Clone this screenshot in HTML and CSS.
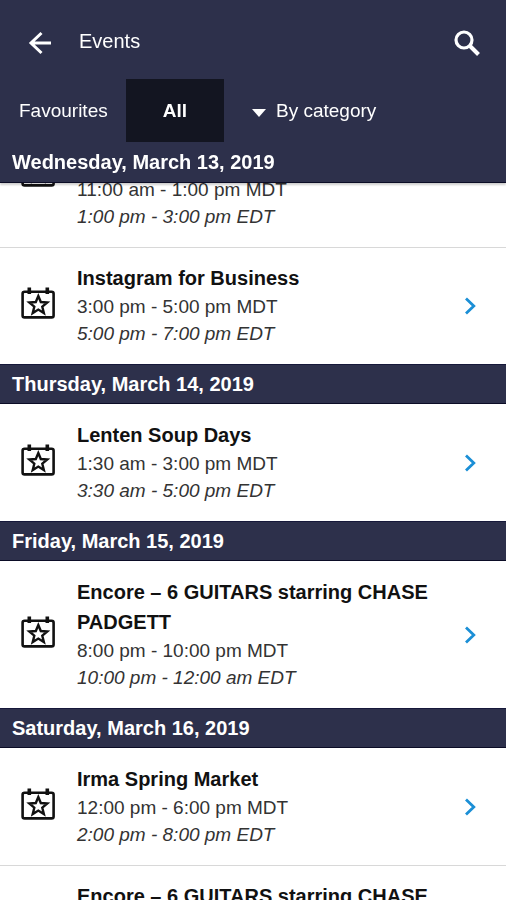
FILE: index.html
```html
<!DOCTYPE html>
<html lang="en">
<head>
<meta charset="utf-8">
<meta name="viewport" content="width=device-width, initial-scale=1">
<title>Events</title>
<link rel="stylesheet" href="styles.css">
</head>
<body>
<svg class="sprite" aria-hidden="true">
  <symbol id="calendar-star" viewBox="0 0 34 32">
    <rect x="1.6" y="4.8" width="31" height="25.6" rx="2" fill="none" stroke="#111" stroke-width="2.6"/>
    <path d="M8.3 0.5v6.5M26.3 0.5v6.5" stroke="#111" stroke-width="3.6"/>
    <path d="M17.3 9l2.5 6 6.5.5-5 4.2 1.6 6.4-5.6-3.5-5.6 3.5 1.6-6.4-5-4.2 6.5-.5z" fill="none" stroke="#111" stroke-width="2.4"/>
  </symbol>
  <symbol id="chevron" viewBox="0 0 12 18">
    <path d="M2 1.5l7.8 7.5L2 16.500" fill="none" stroke="#1b8fd6" stroke-width="2.8"/>
  </symbol>
</svg>

<header class="header">
  <div class="appbar">
    <button class="icon-button" type="button" aria-label="Back">
      <svg class="back-icon" viewBox="0 0 24 24"><path d="M23 12H3M13.500 2L3 12l10.500 10" fill="none" stroke="#fff" stroke-width="3"/></svg>
    </button>
    <h1 class="title">Events</h1>
    <button class="icon-button" type="button" aria-label="Search">
      <svg class="search-icon" viewBox="0 0 26 26"><circle cx="10" cy="10" r="8" fill="none" stroke="#fff" stroke-width="3.2"/><path d="M15.500 15.500l9 9" stroke="#fff" stroke-width="4"/></svg>
    </button>
  </div>
  <nav class="tabs">
    <button class="tab" type="button">Favourites</button>
    <button class="tab tab-active" type="button">All</button>
    <button class="tab tab-menu" type="button"><span class="caret"></span>By category</button>
  </nav>
  <h2 class="date">Wednesday, March 13, 2019</h2>
</header>

<main class="list">
  <article class="event">
    <button class="icon-button" type="button" aria-label="Add to favourites"><svg class="star-icon"><use href="#calendar-star"/></svg></button>
    <a class="link" href="#">
      <span class="info"><strong class="name">&nbsp;<br>&nbsp;</strong><span class="time">11:00 am - 1:00 pm MDT</span><em class="time">1:00 pm - 3:00 pm EDT</em></span>
      <svg class="chevron"><use href="#chevron"/></svg>
    </a>
  </article>
  <article class="event">
    <button class="icon-button" type="button" aria-label="Add to favourites"><svg class="star-icon"><use href="#calendar-star"/></svg></button>
    <a class="link" href="#">
      <span class="info"><strong class="name">Instagram for Business</strong><span class="time">3:00 pm - 5:00 pm MDT</span><em class="time">5:00 pm - 7:00 pm EDT</em></span>
      <svg class="chevron"><use href="#chevron"/></svg>
    </a>
  </article>

  <h2 class="date">Thursday, March 14, 2019</h2>
  <article class="event">
    <button class="icon-button" type="button" aria-label="Add to favourites"><svg class="star-icon"><use href="#calendar-star"/></svg></button>
    <a class="link" href="#">
      <span class="info"><strong class="name">Lenten Soup Days</strong><span class="time">1:30 am - 3:00 pm MDT</span><em class="time">3:30 am - 5:00 pm EDT</em></span>
      <svg class="chevron"><use href="#chevron"/></svg>
    </a>
  </article>

  <h2 class="date">Friday, March 15, 2019</h2>
  <article class="event">
    <button class="icon-button" type="button" aria-label="Add to favourites"><svg class="star-icon"><use href="#calendar-star"/></svg></button>
    <a class="link" href="#">
      <span class="info"><strong class="name">Encore – 6 GUITARS starring CHASE PADGETT</strong><span class="time">8:00 pm - 10:00 pm MDT</span><em class="time">10:00 pm - 12:00 am EDT</em></span>
      <svg class="chevron"><use href="#chevron"/></svg>
    </a>
  </article>

  <h2 class="date">Saturday, March 16, 2019</h2>
  <article class="event">
    <button class="icon-button" type="button" aria-label="Add to favourites"><svg class="star-icon"><use href="#calendar-star"/></svg></button>
    <a class="link" href="#">
      <span class="info"><strong class="name">Irma Spring Market</strong><span class="time">12:00 pm - 6:00 pm MDT</span><em class="time">2:00 pm - 8:00 pm EDT</em></span>
      <svg class="chevron"><use href="#chevron"/></svg>
    </a>
  </article>
  <article class="event">
    <button class="icon-button" type="button" aria-label="Add to favourites"><svg class="star-icon"><use href="#calendar-star"/></svg></button>
    <a class="link" href="#">
      <span class="info"><strong class="name">Encore – 6 GUITARS starring CHASE<br>&nbsp;</strong><span class="time">&nbsp;</span><em class="time">&nbsp;</em></span>
      <svg class="chevron"><use href="#chevron"/></svg>
    </a>
  </article>
</main>
</body>
</html>
```
FILE: styles.css
```css
* {
  box-sizing: border-box;
}

body {
  margin: 0;
  height: 100vh;
  overflow: hidden;
  background: #fff;
  color: #111;
  font-family: "Liberation Sans", Arial, sans-serif;
}

h1,
h2 {
  margin: 0;
}

svg {
  display: block;
}

button {
  border: 0;
  padding: 0;
  background: none;
  color: inherit;
  font: inherit;
}

.sprite {
  display: none;
}

.header {
  position: sticky;
  top: 0;
  z-index: 1;
  border-bottom: 1px solid #0b0c26;
  background: #2d304b;
  color: #fff;
  box-shadow: 0 2px 2px rgba(0, 0, 0, 0.2);
}

.appbar {
  display: flex;
  align-items: center;
  gap: 27px;
  padding: 28px 26px 24px 28px;
}

.title {
  flex: 1;
  font-size: 20px;
  font-weight: 400;
  line-height: 26px;
}

.back-icon,
.search-icon {
  margin: 2px 0 -2px;
}

.back-icon {
  width: 24px;
  height: 24px;
}

.search-icon {
  width: 26px;
  height: 26px;
}

.tabs {
  display: flex;
  padding-top: 1px;
  font-size: 19px;
  line-height: 23px;
}

.tab {
  padding: 20px 18px 20px 19px;
}

.tab-active {
  padding: 20px 37px;
  background: #131521;
  font-weight: 700;
}

.tab-menu {
  display: flex;
  align-items: center;
  gap: 10px;
  padding: 20px 28px;
}

.caret {
  margin-top: 4px;
  border: 7px solid transparent;
  border-top: 8px solid #fff;
  border-bottom: 0;
}

.date {
  padding: 0 12px;
  border-top: 1px solid #16183a;
  border-bottom: 1px solid #0b0c26;
  background: #2d304b;
  color: #fff;
  font-size: 20px;
  font-weight: 700;
  line-height: 38px;
}

.header .date {
  border-color: transparent;
}

/* The list is scrolled partly under the header. */
.list {
  margin-top: -83px;
}

.event {
  display: flex;
  align-items: center;
  gap: 22px;
  padding: 16px 30px 17px 21px;
}

.event + .event {
  padding-top: 15px;
  border-top: 1px solid #d8d8d8;
}

.star-icon {
  width: 34px;
  height: 32px;
  margin-bottom: 4px;
}

.link {
  display: flex;
  flex: 1;
  align-items: center;
  gap: 30px;
  color: inherit;
  text-decoration: none;
}

.info {
  flex: 1;
}

.name {
  display: block;
  font-size: 20px;
  line-height: 30px;
}

.time {
  display: block;
  color: #333;
  font-size: 19px;
  line-height: 27px;
}

.chevron {
  width: 12px;
  height: 18px;
  margin-top: 2px;
}
```
